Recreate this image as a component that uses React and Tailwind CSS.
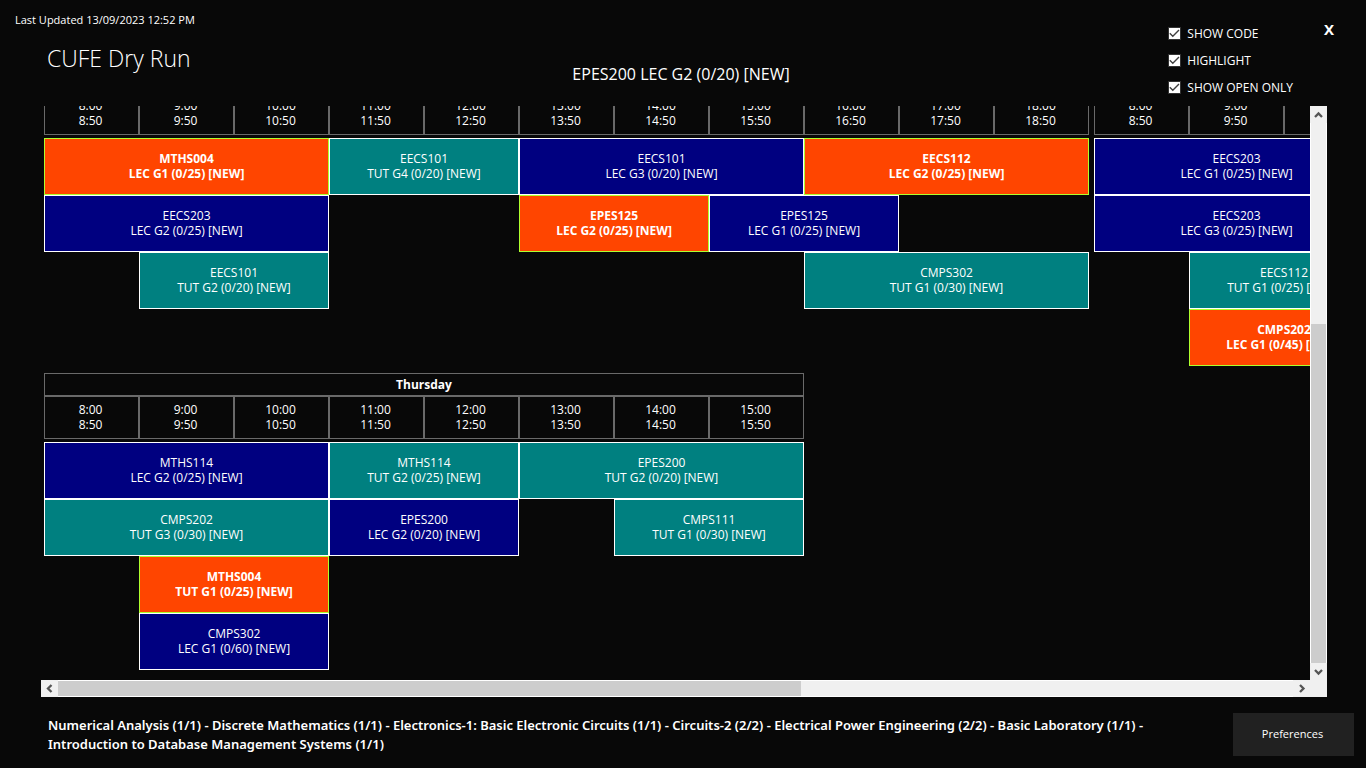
const tones = {
  lec: "border-white bg-[#000080]",
  tut: "border-white bg-[#008080]",
  on: "border-[#adff2f] bg-[#ff4500] font-bold",
};

// Each row lists [columns, tone, course, group]; a missing tone marks free hours.
const firstDay = [
  [
    [3, "on", "MTHS004", "LEC G1 (0/25) [NEW]"],
    [2, "tut", "EECS101", "TUT G4 (0/20) [NEW]"],
    [3, "lec", "EECS101", "LEC G3 (0/20) [NEW]"],
    [3, "on", "EECS112", "LEC G2 (0/25) [NEW]"],
  ],
  [
    [3, "lec", "EECS203", "LEC G2 (0/25) [NEW]"],
    [2],
    [2, "on", "EPES125", "LEC G2 (0/25) [NEW]"],
    [2, "lec", "EPES125", "LEC G1 (0/25) [NEW]"],
    [2],
  ],
  [
    [1],
    [2, "tut", "EECS101", "TUT G2 (0/20) [NEW]"],
    [5],
    [3, "tut", "CMPS302", "TUT G1 (0/30) [NEW]"],
  ],
  [[11]],
];

const secondDay = [
  [[3, "lec", "EECS203", "LEC G1 (0/25) [NEW]"]],
  [[3, "lec", "EECS203", "LEC G3 (0/25) [NEW]"]],
  [[1], [2, "tut", "EECS112", "TUT G1 (0/25) [NEW]"]],
  [[1], [2, "on", "CMPS202", "LEC G1 (0/45) [NEW]"]],
];

const thursday = [
  [
    [3, "lec", "MTHS114", "LEC G2 (0/25) [NEW]"],
    [2, "tut", "MTHS114", "TUT G2 (0/25) [NEW]"],
    [3, "tut", "EPES200", "TUT G2 (0/20) [NEW]"],
  ],
  [
    [3, "tut", "CMPS202", "TUT G3 (0/30) [NEW]"],
    [2, "lec", "EPES200", "LEC G2 (0/20) [NEW]"],
    [1],
    [2, "tut", "CMPS111", "TUT G1 (0/30) [NEW]"],
  ],
  [[1], [2, "on", "MTHS004", "TUT G1 (0/25) [NEW]"], [5]],
  [[1], [2, "lec", "CMPS302", "LEC G1 (0/60) [NEW]"], [5]],
];

function Day({ title, hours, rows }) {
  const columns = Array.from({ length: hours }, (_, i) => 8 + i);
  return (
    <table className="shrink-0 self-start border-separate border-spacing-0 text-center text-xs leading-[15px]">
      <thead>
        {title && (
          <tr className="h-[23px]">
            <th colSpan={hours} className="border border-[#696969] p-0 font-bold">
              {title}
            </th>
          </tr>
        )}
        <tr className="h-[43px]">
          {columns.map((h) => (
            <th key={h} className="border border-[#696969] p-0 pb-0.5 font-normal">
              <div className="w-[93px] pr-0.5">
                {h}:00
                <br />
                {h}:50
              </div>
            </th>
          ))}
        </tr>
      </thead>
      <tbody className="before:block before:h-[3px]">
        {rows.map((row, r) => (
          <tr key={r} className="h-[57px]">
            {row.map(([span, tone, course, group], c) =>
              tone ? (
                <td key={c} colSpan={span} className={`border p-0 pb-0.5 whitespace-nowrap ${tones[tone]}`}>
                  {course}
                  <br />
                  {group}
                </td>
              ) : (
                <td key={c} colSpan={span} className="p-0" />
              ),
            )}
          </tr>
        ))}
      </tbody>
    </table>
  );
}

function Check({ label }) {
  return (
    <label className="flex items-center gap-1.5 text-xs leading-[17px] font-medium">
      <span className="grid size-[13px] place-items-center">
        <input
          type="checkbox"
          defaultChecked
          className="peer col-start-1 row-start-1 size-[13px] appearance-none border border-[#333333] bg-white"
        />
        <svg
          viewBox="0 0 13 13"
          className="pointer-events-none invisible col-start-1 row-start-1 size-[13px] peer-checked:visible"
          fill="none"
          stroke="#404040"
          strokeWidth="1.4"
        >
          <path d="M1.8 6.2 4.8 9.2 11 3" />
        </svg>
      </span>
      {label}
    </label>
  );
}

function Arrow({ label, d }) {
  return (
    <button aria-label={label} className="grid size-[17px] shrink-0 place-items-center bg-[#f0f0f0]">
      <svg viewBox="0 0 17 17" className="size-[17px]" fill="none" stroke="#555555" strokeWidth="2.3">
        <path d={d} />
      </svg>
    </button>
  );
}

export default function App() {
  return (
    <div className="flex h-screen flex-col overflow-hidden bg-[#080808] font-['Open_Sans','Noto_Sans',sans-serif] text-white">
      <header className="grid h-[106px] shrink-0 grid-cols-[1fr_auto_1fr]">
        <div className="pt-3 pl-[15px]">
          <p className="text-[11px] leading-4">Last Updated 13/09/2023 12:52 PM</p>
          <h1 className="mt-3.5 pl-8 text-[23px] leading-8 font-light">CUFE Dry Run</h1>
        </div>
        <p className="self-end pr-1 pb-5 text-base leading-6">EPES200 LEC G2 (0/20) [NEW]</p>
        <div className="flex justify-end gap-[31px] pr-8">
          <div className="flex flex-col gap-2.5 pt-[25px]">
            <Check label="SHOW CODE" />
            <Check label="HIGHLIGHT" />
            <Check label="SHOW OPEN ONLY" />
          </div>
          <button aria-label="Close" className="self-start pt-5 text-[15px] leading-[18px] font-bold">
            X
          </button>
        </div>
      </header>

      <main className="mr-[39px] ml-[41px] flex min-h-0 flex-1 flex-col">
        <div className="flex min-h-0 flex-1">
          <div className="flex min-w-0 flex-1 flex-col justify-end gap-[7px] overflow-hidden pb-2.5 pl-[3px]">
            <div className="flex shrink-0 gap-[5px]">
              <Day hours={11} rows={firstDay} />
              <Day hours={3} rows={secondDay} />
            </div>
            <Day title="Thursday" hours={8} rows={thursday} />
          </div>
          <div className="flex w-[17px] shrink-0 flex-col bg-[#f0f0f0]">
            <Arrow label="Scroll up" d="M5 11 8.5 7.5 12 11" />
            <div className="flex flex-1 flex-col border-x border-white">
              <div className="flex-[201]" />
              <div className="flex-[339] bg-[#cdcdcd]" />
            </div>
            <Arrow label="Scroll down" d="M5 7 8.5 10.5 12 7" />
          </div>
        </div>
        <div className="flex h-[17px] shrink-0 bg-[#f0f0f0] pr-[17px]">
          <Arrow label="Scroll left" d="M10.5 5 7 8.5 10.5 12" />
          <div className="flex flex-1 border-y border-white">
            <div className="flex-[743] bg-[#cdcdcd]" />
            <div className="flex-[492]" />
          </div>
          <Arrow label="Scroll right" d="M7 5 10.5 8.5 7 12" />
        </div>
      </main>

      <footer className="flex h-[71px] shrink-0 items-start justify-between pt-4 pr-3 pl-12">
        <p className="max-w-[1140px] min-w-0 flex-1 pt-[3px] font-['Noto_Sans',sans-serif] text-[13px] leading-[19px] font-semibold">
          Numerical Analysis (1/1) - Discrete Mathematics (1/1) - Electronics-1: Basic Electronic
          Circuits (1/1) - Circuits-2 (2/2) - Electrical Power Engineering (2/2) - Basic Laboratory
          (1/1) - Introduction to Database Management Systems (1/1)
        </p>
        <button className="h-[43px] w-[121px] bg-[#212121] pr-0.5 text-[11px] font-medium">Preferences</button>
      </footer>
    </div>
  );
}
